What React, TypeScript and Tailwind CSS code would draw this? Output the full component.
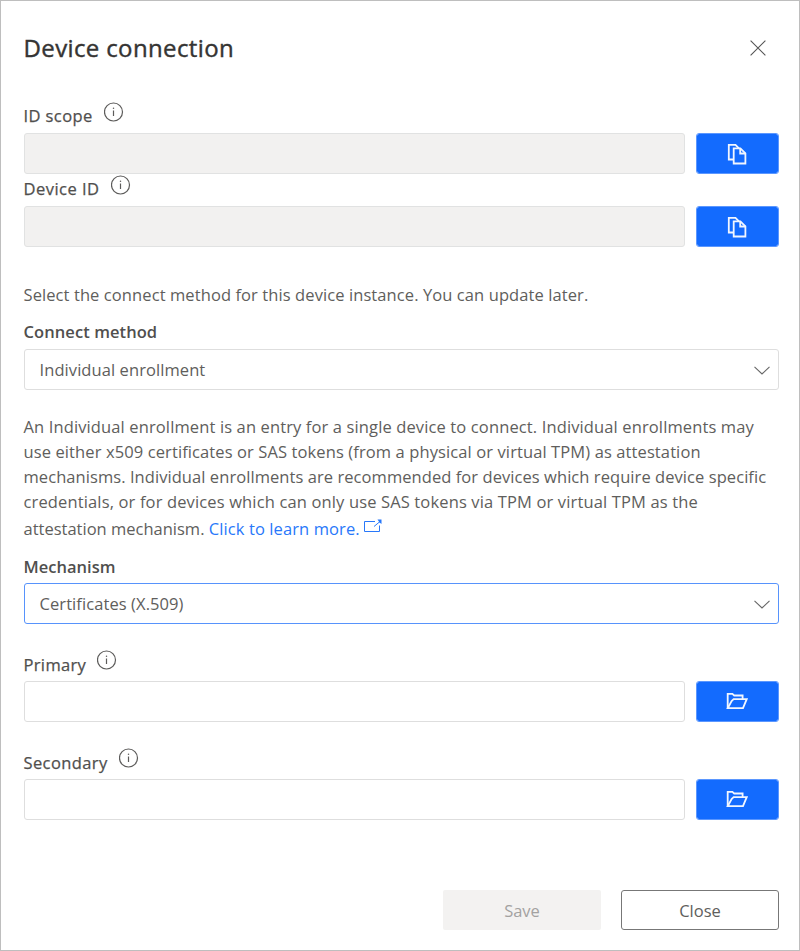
import type { ReactNode } from 'react';

function InfoIcon() {
  return (
    <svg className="size-5 shrink-0" viewBox="0 0 20 20" fill="none" stroke="#5c5b5a">
      <circle cx="9.5" cy="10" r="9" strokeWidth="1.2" />
      <path d="M9.5 8.5v5.5" strokeWidth="1.2" />
      <circle cx="9.5" cy="6.2" r="0.75" fill="#5c5b5a" stroke="none" />
    </svg>
  );
}

function CopyIcon() {
  return (
    <svg className="h-[22px] w-5" viewBox="0 0 20 22" fill="none" stroke="#f1f6ff" strokeWidth="1.8">
      <path d="M6.7 16.5H1.8V1.8h6.7l3.5 3.5" />
      <path d="M6.7 5.3h6.7l5 5v10.2H6.7z" />
      <path d="M13.2 5.4v5.1h5.1" />
    </svg>
  );
}

function FolderIcon() {
  return (
    <svg className="mb-px h-[18px] w-[22px]" viewBox="0 0 22 18" fill="none" stroke="#f1f6ff" strokeWidth="1.8">
      <path d="M1.7 16.2V1.9h4.7l1.8 1.6h8.4V7" />
      <path d="M1.7 16.2 5.6 9l2-1.8h13.100l-3.700 9z" />
    </svg>
  );
}

function Chevron() {
  return (
    <svg className="mt-px h-[9px] w-4" viewBox="0 0 16 9" fill="none" stroke="#666" strokeWidth="1.1">
      <path d="m.5.9 7.5 7 7.5-7" />
    </svg>
  );
}

function Field({ label, labelClass, inputClass, icon, rowClass }: { label: string; labelClass: string; inputClass: string; icon: ReactNode; rowClass: string }) {
  return (
    <div>
      <div className={`flex items-end ${rowClass}`}>
        <label className={`shrink-0 leading-[22px] whitespace-nowrap text-[#504f4e] [-webkit-text-stroke:0.25px_#504f4e] ${labelClass}`}>{label}</label>
        <span className="pb-[11px]"><InfoIcon /></span>
      </div>
      <div className="flex gap-[11px]">
        <div className={`h-[41px] w-[661px] rounded-[3px] border ${inputClass}`} />
        <button className="flex h-[41px] w-[83px] items-center justify-center rounded-[3px] border border-[#5b97ff] bg-[#136bfe] bg-clip-padding">{icon}</button>
      </div>
    </div>
  );
}

function Select({ value, className }: { value: string; className: string }) {
  return (
    <div className={`flex h-[41px] items-center justify-between rounded-[3px] border pr-2 pl-[15px] ${className}`}>
      <span className="pt-0.5 tracking-[0.08px]">{value}</span>
      <Chevron />
    </div>
  );
}

export default function App() {
  return (
    <main className="flex h-[951px] w-[800px] flex-col border border-[#bebebe] bg-white pr-5 pl-[22.5px] font-['Open_Sans','Noto_Sans',sans-serif] text-[16.5px] text-[#605e5c]">
      <header className="flex h-[94px] items-center justify-between pr-[13px]">
        <h1 className="text-[24px] tracking-[0.37px] whitespace-nowrap text-[#353433] [-webkit-text-stroke:0.4px_#353433]">Device connection</h1>
        <svg className="size-4" viewBox="0 0 16 16" stroke="#555" strokeWidth="1.1">
          <path d="M.6.6l14.800 14.800M15.400.6L.6 15.400" />
        </svg>
      </header>
      <Field label="ID scope" rowClass="h-[38px]" labelClass="w-[80px] pb-[6px] tracking-[0.4px]" inputClass="border-[#e1e2e2] bg-[#f2f1f0]" icon={<CopyIcon />} />
      <Field label="Device ID" rowClass="h-8" labelClass="w-[87px] pb-[6px] tracking-[0.48px]" inputClass="border-[#e1e2e2] bg-[#f2f1f0]" icon={<CopyIcon />} />
      <p className="mt-[35px] h-[26px] leading-[25px] tracking-[0.09px] whitespace-nowrap">Select the connect method for this device instance. You can update later.</p>
      <h2 className="mt-3 mb-[5px] h-6 leading-6 font-semibold tracking-[0.08px] text-[#504f4e]">Connect method</h2>
      <Select value="Individual enrollment" className="border-[#dedede]" />
      <div className="mt-6 h-[128px] leading-[25px] whitespace-nowrap">
        <p className="tracking-[0.125px]">An Individual enrollment is an entry for a single device to connect. Individual enrollments may</p>
        <p className="tracking-[0.105px]">use either x509 certificates or SAS tokens (from a physical or virtual TPM) as attestation</p>
        <p className="tracking-[0.065px]">mechanisms. Individual enrollments are recommended for devices which require device specific</p>
        <p className="tracking-[0.14px]">credentials, or for devices which can only use SAS tokens via TPM or virtual TPM as the</p>
        <p className="flex h-7 pt-[2px]">
          <span>attestation mechanism.&nbsp;</span>
          <a className="tracking-[0.1px] text-[#2878fa]">Click to learn more.</a>
          <svg className="mt-[3px] ml-1 h-[15px] w-[18px]" viewBox="0 0 18 15" fill="none" stroke="#2878fa">
            <path d="M11 2.500H.5v10h15V6.500M10 7.500l6-5" />
            <path d="M13.500.5H17.500v4.500L15.500 3.500z" fill="#2878fa" stroke="none" />
          </svg>
        </p>
      </div>
      <h2 className="mt-[13px] mb-1 h-6 leading-6 font-semibold tracking-[0.03px] text-[#504f4e]">Mechanism</h2>
      <Select value="Certificates (X.509)" className="border-[#5793fc]" />
      <div className="mt-[19px]">
        <Field label="Primary" rowClass="h-[38px]" labelClass="w-[73px] pb-[5px] tracking-[0.35px]" inputClass="border-[#dedede]" icon={<FolderIcon />} />
      </div>
      <div className="mt-[19px]">
        <Field label="Secondary" rowClass="h-[38px]" labelClass="w-[95px] pb-[5px] tracking-[0.4px]" inputClass="border-[#dedede]" icon={<FolderIcon />} />
      </div>
      <footer className="mt-auto mb-5 flex justify-end gap-5">
        <button className="h-10 w-[158px] rounded-[2px] bg-[#f3f2f1] pt-0.5 text-[#a3a2a1]">Save</button>
        <button className="h-10 w-[158px] rounded-[3px] border border-[#777] pt-0.5">Close</button>
      </footer>
    </main>
  );
}
